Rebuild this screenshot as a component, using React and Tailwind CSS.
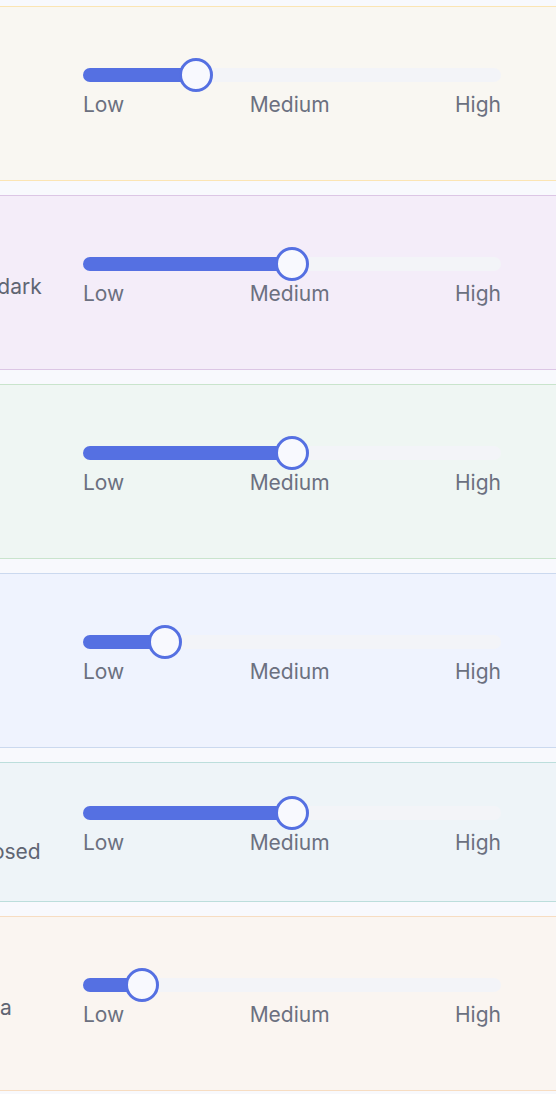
import React from "react";

const rooms = [
  {
    lines: ["Kitchen brightness"],
    value: 25,
    tall: true,
    card: "bg-[#f9f7f2] border-[#fbe5b4]",
  },
  {
    lines: ["Lights switch on after it gets dark"],
    value: 50,
    tall: true,
    card: "bg-[#f4edf9] border-[#dcc6e5]",
  },
  {
    lines: ["Garden sprinklers"],
    value: 50,
    tall: true,
    card: "bg-[#eff6f3] border-[#c9e4cc]",
  },
  {
    lines: ["Heating in the hall"],
    value: 17,
    tall: true,
    card: "bg-[#eff3fe] border-[#cbd9ef]",
  },
  {
    lines: ["Chime volume.", "When a door is opened or closed"],
    value: 50,
    tall: false,
    card: "bg-[#eef4f8] border-[#bcdedc]",
  },
  {
    lines: ["Light levels in the cinema area"],
    value: 11,
    tall: true,
    card: "bg-[#faf5f1] border-[#f7ddc2]",
  },
];

function Slider({ value }) {
  // thumb centre runs from 17px to width-17px, like a native range input
  const left = `calc(17px + (100% - 34px) * ${value / 100})`;
  return (
    <div className="w-[418px] shrink-0 pb-[11px]">
      <div className="relative h-[34px] flex items-center">
        <div className="w-full h-[14px] rounded-full bg-[#f3f4f8]" />
        <div
          className="absolute left-0 top-[10px] h-[14px] rounded-full bg-[#5570e2]"
          style={{ width: left }}
        />
        <div
          className="absolute top-0 w-[34px] h-[34px] -ml-[17px] rounded-full bg-[#f8f9fe] border-[3px] border-[#5570e2]"
          style={{ left }}
        />
      </div>
      <div className="-mt-[1px] flex justify-between text-[21px] leading-7 text-[#6b7080]">
        <span>Low</span>
        <span>Medium</span>
        <span>High</span>
      </div>
    </div>
  );
}

export default function App() {
  return (
    <div
      className="w-[556px] min-h-[1094px] overflow-hidden bg-[#f8f9fd] pt-[6px]"
      style={{ fontFamily: "Inter, 'Noto Sans', sans-serif" }}
    >
      <div className="-ml-[313px] w-[1040px] flex flex-col gap-[14px]">
        {rooms.map((room, i) => (
          <div
            key={i}
            className={`flex items-center gap-10 pl-6 border ${room.card} ${
              room.tall ? "h-[175px]" : "h-[140px]"
            }`}
          >
            <div className="w-[331px] shrink-0 pt-[9px] text-[21px] leading-[30px] text-[#5f6573] whitespace-nowrap">
              {room.lines.map((line) => (
                <div key={line}>{line}</div>
              ))}
            </div>
            <Slider value={room.value} />
          </div>
        ))}
      </div>
    </div>
  );
}
